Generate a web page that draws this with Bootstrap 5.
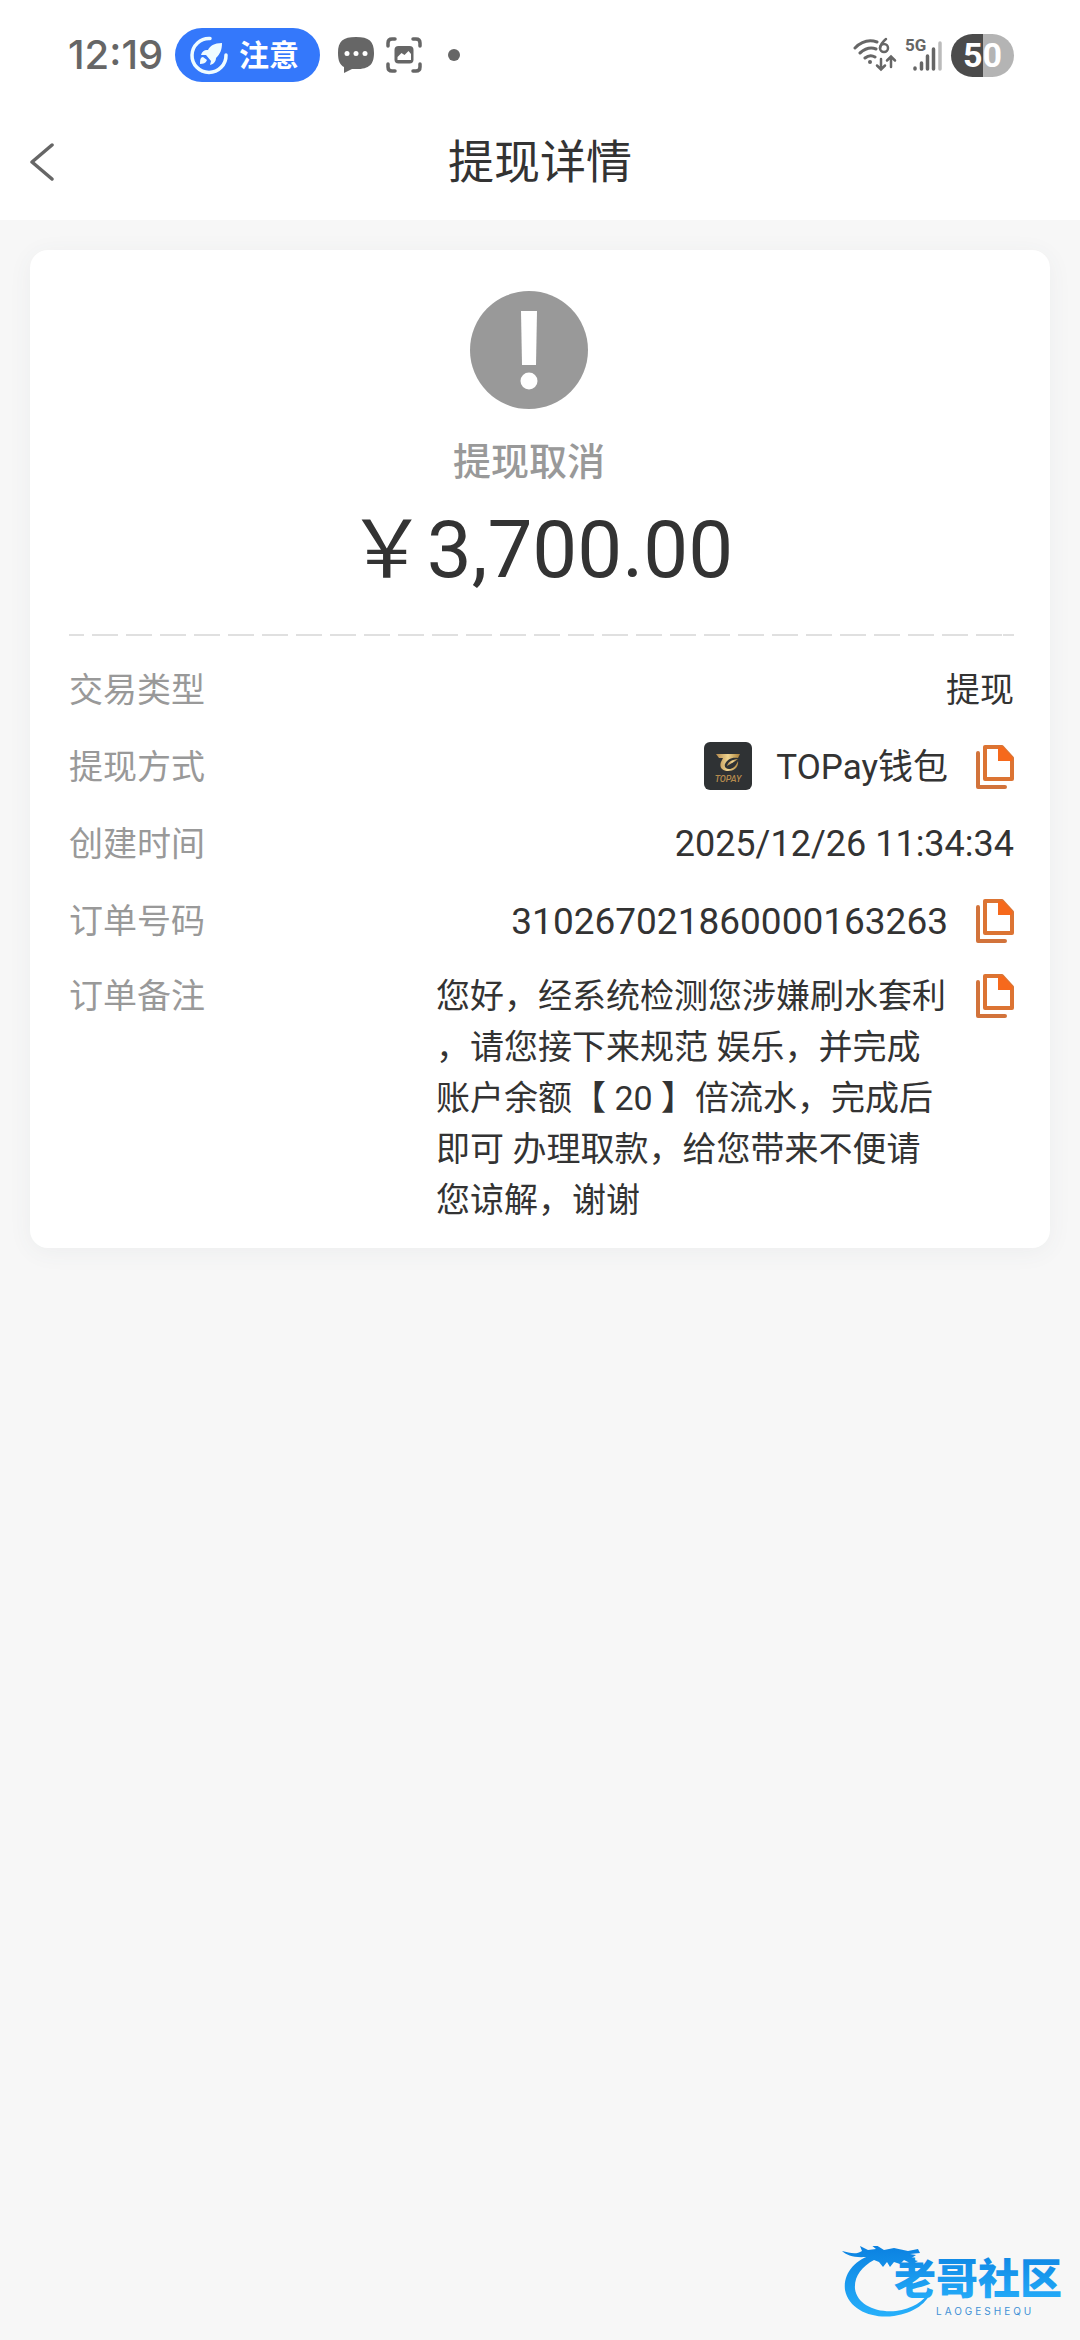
<!DOCTYPE html>
<html lang="zh-CN">
<head>
<meta charset="utf-8">
<meta name="viewport" content="width=device-width, initial-scale=1">
<title>提现详情</title>
<link rel="stylesheet" href="https://cdn.jsdelivr.net/npm/bootstrap@5.3.0/dist/css/bootstrap.min.css">
<style>
  body { background: #f7f7f7; color: #333; font-family: Roboto, "Noto Sans CJK SC", sans-serif; font-size: 34px; line-height: 51px; }
  svg { display: block; flex: none; }
  .status-bar { height: 110px; padding: 0 66px 0 68px; color: #666; }
  .clock { font: 500 40px/48px Inter, sans-serif; width: 107px; }
  .notice-pill { background: #3478fb; color: #fff; border-radius: 28px; height: 54px; padding: 0 21px 0 14px; gap: 10px; font-size: 30px; font-weight: 700; }
  .status-icons { gap: 12px; margin-left: 18px; }
  .battery { width: 63px; height: 43px; border-radius: 22px; background: linear-gradient(90deg, #4b4b4b 50%, #b4b4b4 50%); color: #fff; font: 700 34px/43px Roboto, sans-serif; }
  .title-bar { height: 110px; padding: 0 30px 6px; }
  .title-bar h1 { font-size: 46px; line-height: 60px; font-weight: 400; }
  .side-slot { width: 60px; }
  .plain-btn { border: 0; background: none; padding: 0; }
  .detail-card { margin: 30px 30px 0; padding: 41px 36px 22px 39px; border: 0; border-radius: 18px; color: inherit; box-shadow: 0 4px 24px rgba(60, 80, 110, .06); }
  .summary { padding-right: 3px; }
  .state-block { padding-right: 22px; }
  .state-name { margin-top: 25px; color: #999; font-size: 38px; line-height: 56px; font-weight: 500; }
  .amount { margin-top: 12px; font-size: 80px; line-height: 96px; }
  .dash-line { height: 2px; margin: 36px 0 16px; background: repeating-linear-gradient(90deg, #e0e0e0 0 26px, transparent 26px 34px) -11px 0; }
  .detail-row { min-height: 77px; padding: 13px 0; }
  .detail-row:last-child { padding: 11px 0 0; }
  .detail-row dt { color: #999; font-weight: 400; }
  .detail-row dd { margin: 0; gap: 28px; }
  .wallet { gap: 24px; font-size: 35px; }
  .figures { font-size: 36px; }
  .order-no { font-size: 37px; }
  .memo { width: 512px; line-break: anywhere; }
  .copy-btn { margin-top: 3px; }
  .site-mark { padding: 0 12px 18px 0; }
</style>
</head>
<body>
<svg width="0" height="0" class="position-absolute" aria-hidden="true">
  <symbol id="copy" viewBox="0 0 38 44">
    <path d="M2 8v34h27" fill="none" stroke="#d2733b" stroke-width="4" stroke-linejoin="round" stroke-linecap="round"/>
    <path d="M9 2h17l10 11v21H9z" fill="#fff" stroke="#dc7433" stroke-width="4" stroke-linejoin="round"/>
    <path d="M22 2h5l9 10v4H22z" fill="#f6691c"/>
  </symbol>
</svg>
<div class="min-vh-100 d-flex flex-column">
  <div class="status-bar bg-white d-flex align-items-center">
    <span class="clock">12:19</span>
    <span class="notice-pill d-flex align-items-center">
      <svg width="40" height="40" viewBox="0 0 40 40" fill="none" aria-hidden="true">
        <path d="M21 3.500A17 17 0 1 0 37 20" stroke="#effcff" stroke-width="3.500" stroke-linecap="round"/>
        <path d="M33 8c-8 0-12 3-14 7-3-.5-6 1-7 5l5 0 5 6-1 4c4-1 6-4 6-7 4-4 6-8 6-15z" fill="#effcff"/>
        <path d="M14 22c-3 0-3 4-3 7 3 0 6-1 7-4z" fill="#effcff"/>
      </svg>
      <span>注意</span>
    </span>
    <span class="status-icons d-flex align-items-center">
      <svg width="36" height="36" viewBox="0 0 36 36" aria-hidden="true">
        <path d="M18 0C5 0 0 4 0 16c0 8 2 12 6 14v6l8-4c17 1 22-4 22-16S31 0 18 0z" fill="#666"/>
        <g fill="#fff"><circle cx="9" cy="16.500" r="2.500"/><circle cx="18" cy="16.500" r="2.500"/><circle cx="27" cy="16.500" r="2.500"/></g>
      </svg>
      <svg width="36" height="36" viewBox="0 0 36 36" fill="none" aria-hidden="true">
        <path d="M2 9V6q0-4 4-4h3M27 2h3q4 0 4 4v3M34 27v3q0 4-4 4h-3M9 34H6q-4 0-4-4v-3" stroke="#666" stroke-width="3.500" stroke-linecap="round"/>
        <rect x="8.500" y="9" width="19" height="17.500" rx="4" fill="#666"/>
        <path d="M11.500 23v-3l4-4 3 2 4-4 2.500 3v6z" fill="#fff"/>
      </svg>
      <svg class="ms-2" width="34" height="12" viewBox="0 0 34 12" aria-hidden="true"><circle cx="12" cy="6" r="6" fill="#666"/></svg>
    </span>
    <span class="d-flex align-items-center ms-auto">
      <svg width="44" height="36" viewBox="0 0 44 36" fill="none" stroke="#666" stroke-width="3" stroke-linecap="round" aria-hidden="true">
        <path d="M2 11Q12 1 24 5M7 16q8-7 16-4M12 21q5-4 10-1"/>
        <circle cx="17" cy="25" r="2" fill="#666" stroke="none"/>
        <path d="M33 2q-5 4-6 9" stroke-width="2.500"/><ellipse cx="31" cy="11" rx="4" ry="4" stroke-width="2.500"/>
        <path d="M28 22v10M24 28.500l4 4 4-4M38 30V20M34 23.500l4-4 4 4" stroke-width="2.500"/>
      </svg>
      <svg class="ms-2" width="38" height="48" viewBox="0 -6 38 48" aria-hidden="true">
        <text x="0" y="14" font-family="Roboto, sans-serif" font-size="17" font-weight="700" fill="#666">5G</text>
        <g stroke-width="3.500" stroke-linecap="round" stroke="#666"><path d="M10 31v1M16.500 26v6M22.500 19v13M28.500 12v20"/><path d="M35 6v26" stroke="#bbb"/></g>
      </svg>
      <span class="battery text-center ms-2">50</span>
    </span>
  </div>

  <header class="title-bar bg-white d-flex align-items-center justify-content-between">
    <button type="button" class="plain-btn side-slot" aria-label="返回">
      <svg width="24" height="38" viewBox="0 0 24 38" fill="none" aria-hidden="true"><path d="M22 2L2 19l20 17" stroke="#666" stroke-width="3.500" stroke-linecap="round" stroke-linejoin="round"/></svg>
    </button>
    <h1 class="m-0">提现详情</h1>
    <span class="side-slot"></span>
  </header>

  <main class="card detail-card">
    <section class="summary text-center">
      <div class="state-block d-flex flex-column align-items-center">
        <svg width="118" height="118" viewBox="0 0 118 118" aria-hidden="true">
          <circle cx="59" cy="59" r="59" fill="#999"/>
          <path d="M51 20h16l-1 54H52z" fill="#fff"/><circle cx="59" cy="90" r="8.500" fill="#fff"/>
        </svg>
        <div class="state-name">提现取消</div>
      </div>
      <div class="amount">￥3,700.00</div>
    </section>
    <div class="dash-line"></div>
    <dl class="m-0">
      <div class="detail-row d-flex justify-content-between">
        <dt>交易类型</dt>
        <dd>提现</dd>
      </div>
      <div class="detail-row d-flex justify-content-between">
        <dt>提现方式</dt>
        <dd class="d-flex align-items-start">
          <span class="wallet d-flex">
            <svg width="48" height="48" viewBox="0 0 48 48" role="img" aria-label="TOPay">
              <defs><linearGradient id="gold" x1="0" x2="1"><stop offset="0" stop-color="#b58a4d"/><stop offset=".5" stop-color="#f0d590"/><stop offset="1" stop-color="#a87d35"/></linearGradient></defs>
              <rect width="48" height="48" rx="6" fill="#2f3234"/>
              <path d="M12 12h24l-2 4c-7-1-11 2-13 6-1 3 1 5 4 5 4 0 7-3 9-8 1 6-4 10-10 10-6 0-9-4-7-9l2-4h-4z" fill="url(#gold)"/>
              <path d="M23 24c1-4 4-6 11-7-3 2-7 5-11 7z" fill="url(#gold)"/>
              <text x="24" y="40" text-anchor="middle" font-family="Roboto, sans-serif" font-style="italic" font-weight="500" font-size="9" fill="#b58a4d">TOPAY</text>
            </svg>
            <span>TOPay钱包</span>
          </span>
          <button type="button" class="plain-btn copy-btn" aria-label="复制提现方式"><svg width="38" height="44"><use href="#copy"/></svg></button>
        </dd>
      </div>
      <div class="detail-row d-flex justify-content-between">
        <dt>创建时间</dt>
        <dd class="figures">2025/12/26 11:34:34</dd>
      </div>
      <div class="detail-row d-flex justify-content-between">
        <dt>订单号码</dt>
        <dd class="d-flex align-items-start">
          <span class="order-no">310267021860000163263</span>
          <button type="button" class="plain-btn copy-btn" aria-label="复制订单号码"><svg width="38" height="44"><use href="#copy"/></svg></button>
        </dd>
      </div>
      <div class="detail-row d-flex justify-content-between">
        <dt>订单备注</dt>
        <dd class="d-flex align-items-start">
          <span class="memo">您好，经系统检测您涉嫌刷水套利，请您接下来规范 娱乐，并完成账户余额【 20 】倍流水，完成后即可 办理取款，给您带来不便请您谅解，谢谢</span>
          <button type="button" class="plain-btn copy-btn" aria-label="复制订单备注"><svg width="38" height="44"><use href="#copy"/></svg></button>
        </dd>
      </div>
    </dl>
  </main>

  <footer class="site-mark mt-auto align-self-end">
    <svg width="226" height="76" viewBox="0 0 226 76" role="img" aria-label="老哥社区">
      <defs>
        <linearGradient id="sea" x1="0" y1="0" x2="0" y2="1"><stop offset="0" stop-color="#0a80e0"/><stop offset="1" stop-color="#27b0fb"/></linearGradient>
      </defs>
      <path d="M32 8C12 14 1 28 3 44c4 20 27 29 49 26 20-3 34-13 38-27-9 13-20 20-36 22-21 2-39-7-41-22-1-12 6-22 19-29l5 2 4 5 4-5 3 5 4-5 6 2 4-4 8 4 6-3-8-2 6-4-6-1 10-1-2-4-10 2-14-3-10 2-8-5-6-1 6 5-8 1-8-4 2 5C14 9 8 7 0 5c5 5 16 8 30 5z" fill="url(#sea)"/>
      <text x="52" y="48" font-family="'Noto Sans CJK SC', sans-serif" font-size="42" font-weight="900" fill="url(#sea)">老哥社区</text>
      <text x="94" y="69" font-family="Inter, sans-serif" font-size="10" letter-spacing="3" fill="#3f91d6">LAOGESHEQU</text>
    </svg>
  </footer>
</div>
<script src="https://cdn.jsdelivr.net/npm/bootstrap@5.3.0/dist/js/bootstrap.bundle.min.js"></script>
</body>
</html>
